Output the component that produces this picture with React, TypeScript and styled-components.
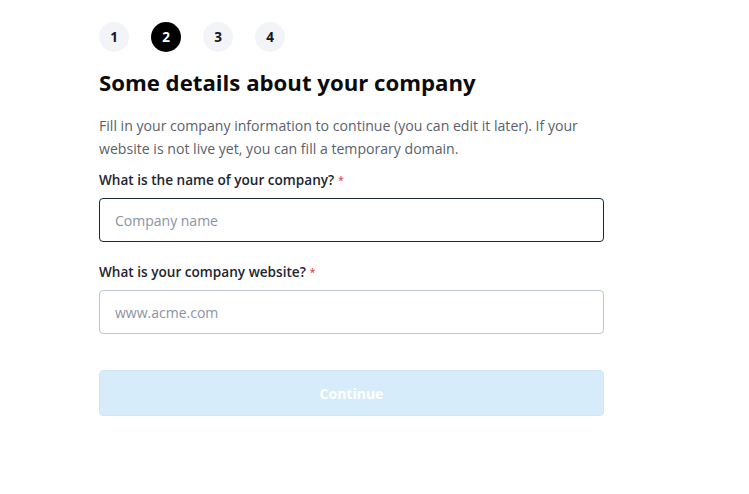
import React from "react";
import styled, { createGlobalStyle } from "styled-components";

const GlobalStyle = createGlobalStyle`
  body {
    margin: 0;
    background: #ffffff;
    font-family: "Open Sans", "Liberation Sans", sans-serif;
  }
`;

const Page = styled.div`
  width: 505px;
  padding: 22px 0 0 99px;
  display: flex;
  flex-direction: column;
`;

const Steps = styled.div`
  display: flex;
  gap: 22px;
`;

const Step = styled.div<{ $active?: boolean }>`
  width: 30px;
  height: 30px;
  border-radius: 50%;
  display: flex;
  align-items: center;
  justify-content: center;
  font-size: 13.5px;
  font-weight: 700;
  background: ${(p) => (p.$active ? "#000000" : "#f2f4f7")};
  color: ${(p) => (p.$active ? "#ffffff" : "#101828")};
`;

const Title = styled.h1`
  margin: 16px 0 0;
  font-size: 22.2px;
  line-height: 30px;
  font-weight: 700;
  color: #0b0b0b;
`;

const Intro = styled.p`
  margin: 16px 0 0;
  font-size: 14.1px;
  line-height: 23px;
  color: #5a5f6b;
`;

const Field = styled.div<{ $gap: number }>`
  display: flex;
  flex-direction: column;
  margin-top: ${(p) => p.$gap}px;
`;

const Label = styled.label`
  font-size: 13.6px;
  line-height: 18px;
  font-weight: 600;
  color: #1d2533;
  margin-bottom: 9px;
`;

const Required = styled.span`
  color: #e5484d;
  font-size: 10px;
  margin-left: 4px;
  vertical-align: top;
`;

const Input = styled.input<{ $focused?: boolean }>`
  box-sizing: border-box;
  width: 100%;
  height: 44px;
  padding: 0 15px;
  border-radius: 4px;
  border: 1px solid ${(p) => (p.$focused ? "#1e293b" : "#b7c6d8")};
  font-family: inherit;
  font-size: 14px;
  color: #1d2533;
  outline: none;
  &::placeholder {
    color: #8a93a6;
  }
`;

const Button = styled.button`
  margin-top: 36px;
  height: 46px;
  width: 100%;
  border: 1px solid #cfe6f6;
  border-radius: 4px;
  background: #d6ecfa;
  color: #ffffff;
  font-family: inherit;
  font-size: 14px;
  font-weight: 700;
`;

export default function App() {
  return (
    <>
      <GlobalStyle />
      <Page>
        <Steps>
          {[1, 2, 3, 4].map((n) => (
            <Step key={n} $active={n === 2}>
              {n}
            </Step>
          ))}
        </Steps>
        <Title>Some details about your company</Title>
        <Intro>
          Fill in your company information to continue (you can edit it later). If your
          website is not live yet, you can fill a temporary domain.
        </Intro>
        <Field $gap={11}>
          <Label>
            What is the name of your company?<Required>*</Required>
          </Label>
          <Input $focused autoFocus placeholder="Company name" />
        </Field>
        <Field $gap={21}>
          <Label>
            What is your company website?<Required>*</Required>
          </Label>
          <Input placeholder="www.acme.com" />
        </Field>
        <Button disabled>Continue</Button>
      </Page>
    </>
  );
}
